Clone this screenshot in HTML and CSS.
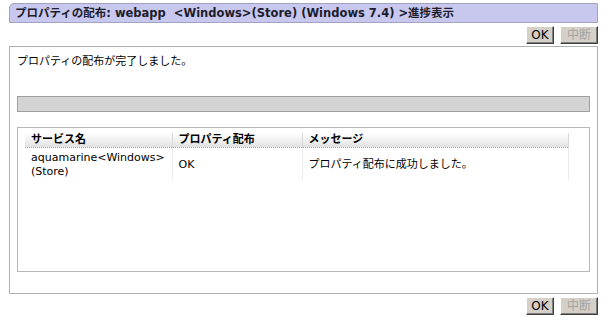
FILE: index.html
```html
<!DOCTYPE html>
<html lang="ja">
<head>
<meta charset="utf-8">
<title>プロパティの配布</title>
<link rel="stylesheet" href="styles.css">
</head>
<body>
<div class="page">
  <div class="titlebar">プロパティの配布: <span class="app">webapp</span>&nbsp;&nbsp;&lt;Windows&gt;(Store) (Windows 7.4) &gt;進捗表示</div>
  <div class="btnrow">
    <button class="btn btn-ok">OK</button>
    <button class="btn btn-stop" disabled>中断</button>
  </div>
  <div class="panel">
    <p class="msg">プロパティの配布が完了しました。</p>
    <div class="progress"></div>
    <div class="listbox">
      <table class="grid">
        <colgroup>
          <col class="c1"><col class="c2"><col class="c3">
        </colgroup>
        <thead>
          <tr><th>サービス名</th><th>プロパティ配布</th><th>メッセージ</th></tr>
        </thead>
        <tbody>
          <tr>
            <td>aquamarine&lt;Windows&gt;<wbr>(Store)</td>
            <td>OK</td>
            <td>プロパティ配布に成功しました。</td>
          </tr>
        </tbody>
      </table>
    </div>
  </div>
  <div class="btnrow btnrow-bottom">
    <button class="btn btn-ok">OK</button>
    <button class="btn btn-stop" disabled>中断</button>
  </div>
</div>
</body>
</html>
```

FILE: styles.css
```css
html, body {
  margin: 0;
  padding: 0;
  background: #ffffff;
}
body {
  font-family: "DejaVu Sans", "Noto Sans CJK JP", sans-serif;
  font-size: 11px;
  color: #000000;
}
.page {
  padding: 3px 13px 0 9px;
}
.titlebar {
  height: 20px;
  box-sizing: border-box;
  background: #c8c8ee;
  border: 1px solid #a2a2c2;
  border-top-left-radius: 5px;
  padding-left: 5px;
  font-weight: bold;
  font-size: 11.5px;
  line-height: 18px;
  color: #1c1c2c;
  white-space: nowrap;
  overflow: hidden;
}
.btnrow {
  display: flex;
  justify-content: flex-end;
  gap: 6px;
  margin-top: 3px;
  margin-bottom: 2px;
}
.btnrow-bottom {
  margin-top: 3px;
  margin-bottom: 0;
}
.btn {
  height: 18px;
  box-sizing: border-box;
  padding: 0;
  margin: 0;
  background: #d4d0c8;
  border: 1px solid;
  border-color: #ffffff #404040 #404040 #ffffff;
  box-shadow: inset -1px -1px 0 #808080;
  font-family: "DejaVu Sans", "Noto Sans CJK JP", sans-serif;
  font-size: 12px;
  line-height: 15px;
  color: #000000;
}
.btn-ok {
  width: 28px;
}
.btn-stop {
  width: 38px;
  color: #a4a4a4;
}
.panel {
  height: 248px;
  box-sizing: border-box;
  border: 1px solid #b0b0b0;
  padding: 8px 7px 0 7px;
}
.msg {
  margin: 0;
  line-height: 14px;
}
.progress {
  margin-top: 27px;
  height: 16px;
  box-sizing: border-box;
  background: #d4d4d4;
  border: 1px solid #a0a0a0;
}
.listbox {
  margin-top: 15px;
  height: 145px;
  box-sizing: border-box;
  border: 1px solid #b8b8b8;
  padding: 5px 0 0 7px;
}
.grid {
  width: 543px;
  border-collapse: collapse;
  table-layout: fixed;
}
.c1 { width: 147px; }
.c2 { width: 130px; }
.c3 { width: 266px; }
.grid th {
  height: 14px;
  padding: 0 4px 0 6px;
  text-align: left;
  font-weight: bold;
  line-height: 14px;
  background: linear-gradient(#ffffff, #e2e2e2);
  border-bottom: 1px dotted #a0a0a0;
  border-right: 1px solid #d8d8d8;
}
.grid td {
  padding: 3px 4px 1px 6px;
  line-height: 14px;
  vertical-align: middle;
  border-right: 1px solid #ececec;
}
```
